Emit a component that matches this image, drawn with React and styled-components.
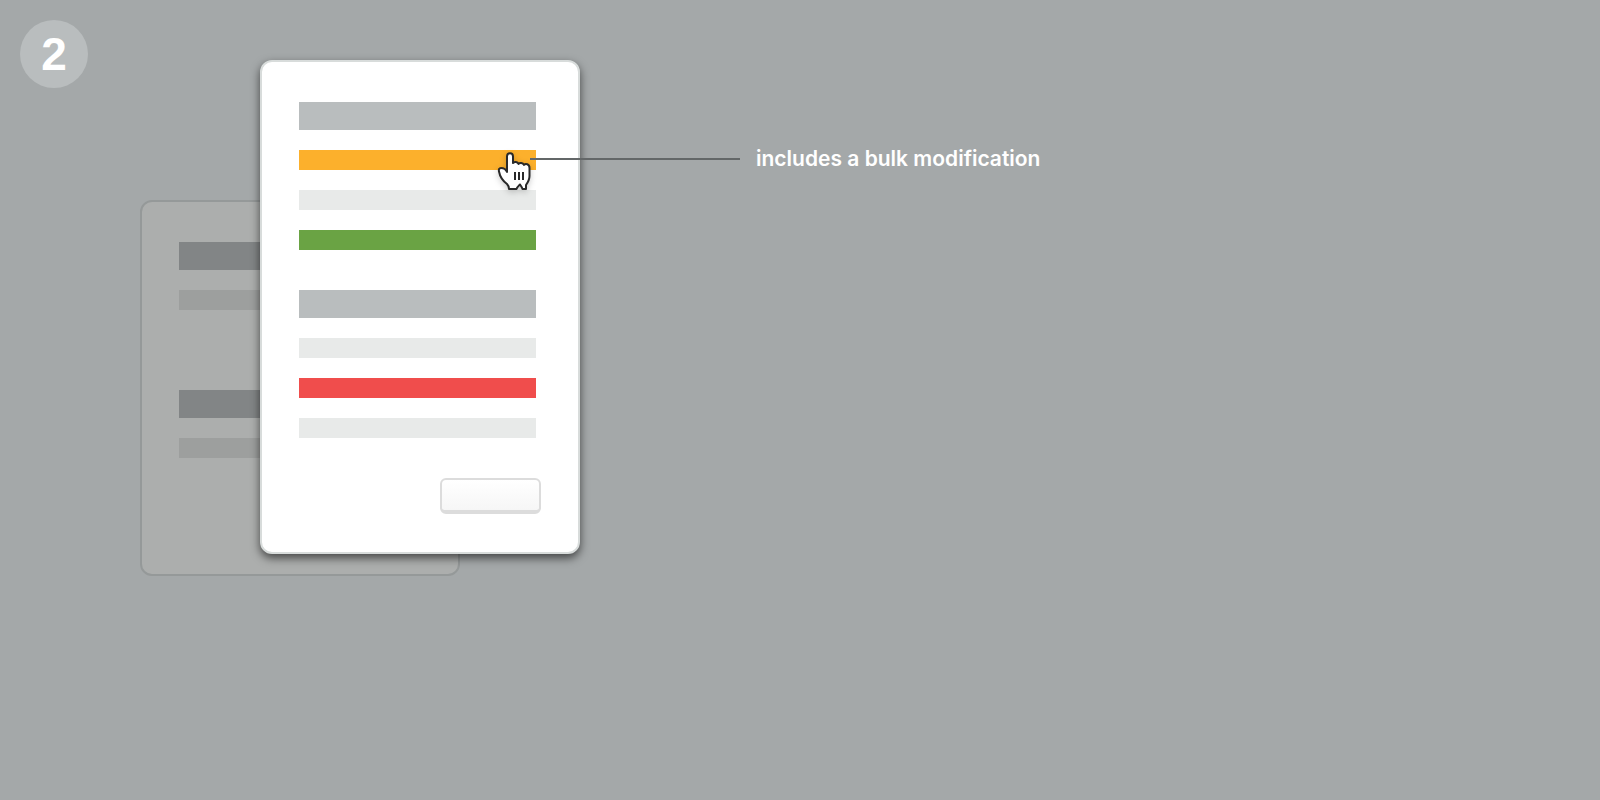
import React from 'react';
import styled, { createGlobalStyle } from 'styled-components';

const GlobalStyle = createGlobalStyle`
  body {
    margin: 0;
    background: #a4a8a9;
    font-family: Inter, "Liberation Sans", sans-serif;
  }
`;

const Stage = styled.main`
  position: relative;
  box-sizing: border-box;
  min-height: 100vh;
  padding: 200px 20px 20px 140px;
  overflow: hidden;
`;

const StepBadge = styled.div`
  position: absolute;
  top: 20px;
  left: 20px;
  display: flex;
  align-items: center;
  justify-content: center;
  width: 68px;
  height: 68px;
  border-radius: 50%;
  background: #b9bdbe;
  color: #fff;
  font-family: "Liberation Sans", Arial, sans-serif;
  font-size: 46px;
  font-weight: 700;
  line-height: 68px;
`;

const Card = styled.section`
  box-sizing: border-box;
  display: flex;
  flex-direction: column;
  width: 320px;
  padding: 40px 37px 38px;
  border: 2px solid #d8dcdb;
  border-radius: 12px;
  background: #fff;
`;

const BackCard = styled(Card)`
  gap: 80px;
  padding-bottom: 116px;
  border-color: #959999;
  background: #acaead;
`;

const FrontCard = styled(Card)`
  position: absolute;
  top: 60px;
  left: 260px;
  gap: 40px;
  box-shadow: 0 4px 10px rgba(0, 0, 0, 0.6);
`;

const Group = styled.div`
  display: flex;
  flex-direction: column;
  gap: 20px;
  margin-right: 5px;
`;

const tones = {
  heading: '#b9bdbe',
  plain: '#e8eae9',
  modified: '#fcb02c',
  added: '#6aa344',
  removed: '#f04d4c',
  dimHeading: '#828586',
  dimPlain: '#9d9f9e',
};

const Bar = styled.div`
  height: ${({ $tall }) => ($tall ? 28 : 20)}px;
  background: ${({ $tone }) => tones[$tone]};
`;

const CardButton = styled.button`
  align-self: flex-end;
  width: 101px;
  height: 36px;
  padding: 0;
  border: 2px solid #dcdcdc;
  border-bottom-width: 4px;
  border-radius: 6px;
  background: linear-gradient(#fff, #f6f6f6);
`;

const Annotation = styled.div`
  position: absolute;
  top: 143px;
  left: 530px;
  display: flex;
  align-items: center;
  gap: 16px;
  color: #fff;
  font-size: 21px;
  font-weight: 600;
  line-height: 32px;
  white-space: nowrap;
`;

const Leader = styled.span`
  width: 210px;
  height: 2px;
  background: #636768;
`;

const Pointer = styled.svg`
  position: absolute;
  top: 150px;
  left: 496px;
  overflow: visible;
  filter: drop-shadow(0 2px 3px rgba(0, 0, 0, 0.2));
`;

export default function App() {
  return (
    <Stage>
      <GlobalStyle />
      <StepBadge>2</StepBadge>
      <BackCard>
        <Group>
          <Bar $tall $tone="dimHeading" />
          <Bar $tone="dimPlain" />
        </Group>
        <Group>
          <Bar $tall $tone="dimHeading" />
          <Bar $tone="dimPlain" />
        </Group>
      </BackCard>
      <FrontCard>
        <Group>
          <Bar $tall $tone="heading" />
          <Bar $tone="modified" />
          <Bar $tone="plain" />
          <Bar $tone="added" />
        </Group>
        <Group>
          <Bar $tall $tone="heading" />
          <Bar $tone="plain" />
          <Bar $tone="removed" />
          <Bar $tone="plain" />
        </Group>
        <CardButton type="button" aria-label="Confirm" />
      </FrontCard>
      <Annotation>
        <Leader />
        <span>includes a bulk modification</span>
      </Annotation>
      <Pointer width="36" height="42" viewBox="0 0 36 42" aria-hidden="true">
        <path
          d="M11 22 C10 19.500 8 18 5 18 C3 18 2.600 19.500 3 21.500 C4 27 7 31 11 34 C12.500 35.500 13 36 13 39 H20.500 C21 37 22.500 36 24 34.500 C25 36 26 37 26.500 39 H30 V35 C32.500 31.500 33.500 29 33.500 26 V18 C33.500 14 29.500 13 28 15 C27 12.500 23.500 12.500 22.500 14 C21.500 11.500 18.500 11.500 17 13 V6.500 C17 2 11 2 11 6.500 Z"
          fill="#fff"
          stroke="#292929"
          strokeWidth="2"
          strokeLinejoin="round"
        />
        <path d="M19 22 V30 M23 22 V30 M27 22 V30" stroke="#292929" strokeWidth="2" />
      </Pointer>
    </Stage>
  );
}
